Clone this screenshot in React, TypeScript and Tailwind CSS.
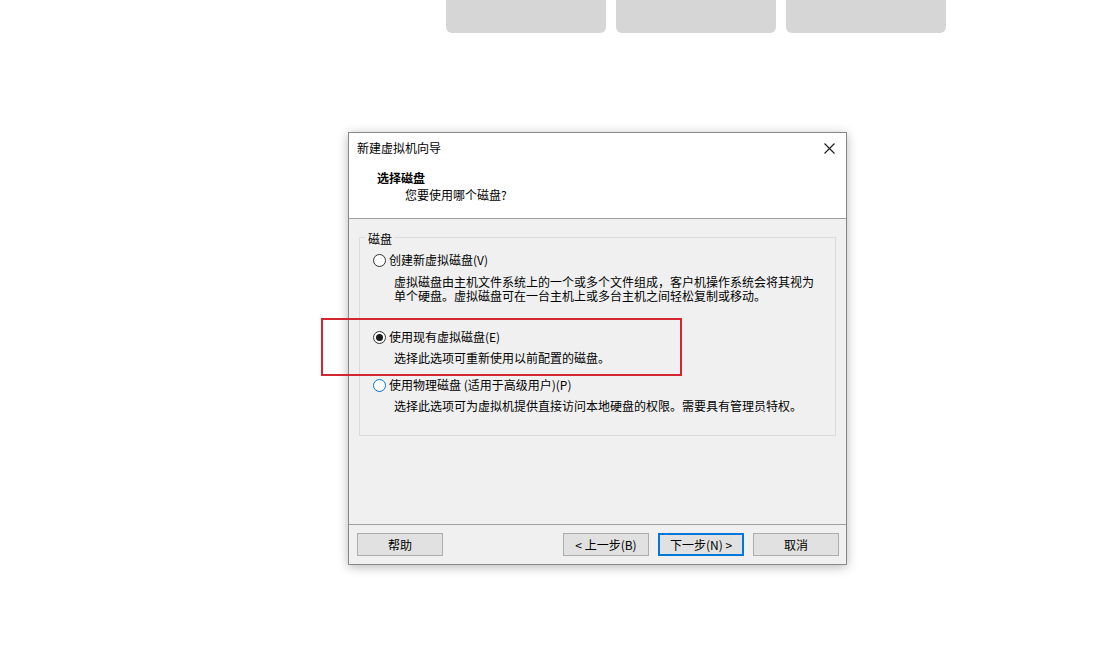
import React from 'react';

const font = { fontFamily: '"Noto Sans CJK SC", "Noto Sans", sans-serif' };

function Radio({ checked, focus }: { checked?: boolean; focus?: boolean }) {
    return (
        <span
            className={`flex h-[13px] w-[13px] shrink-0 items-center justify-center rounded-full border bg-white ${
                focus ? 'border-[#0078d7]' : 'border-[#333333]'
            }`}
        >
            {checked && <span className="h-[7px] w-[7px] rounded-full bg-[#1a1a1a]" />}
        </span>
    );
}

function WinButton({ label, primary }: { label: string; primary?: boolean }) {
    return (
        <button
            className={`flex h-[23px] w-[86px] items-center justify-center bg-[#e1e1e1] text-[12px] leading-none text-black ${
                primary ? 'border-2 border-[#0078d7]' : 'border border-[#adadad]'
            }`}
        >
            {label}
        </button>
    );
}

export default function App() {
    return (
        <div className="relative h-[659px] w-[1103px] overflow-hidden bg-white" style={font}>
            {/* Buttons of the page behind, cut off at the top */}
            <div className="ml-[446px] flex gap-[10px]">
                {[0, 1, 2].map((i) => (
                    <div key={i} className="h-[33px] w-[160px] rounded-b-[6px] bg-[#d6d6d6]" />
                ))}
            </div>

            {/* Wizard dialog */}
            <div className="ml-[348px] mt-[99px] flex h-[433px] w-[499px] flex-col border border-[#888888] bg-white shadow-[0_2px_10px_rgba(0,0,0,0.28)]">
                {/* Title bar */}
                <div className="flex h-[30px] items-center justify-between pl-[8px] pr-[11px]">
                    <span className="text-[12px] text-black">新建虚拟机向导</span>
                    <svg width="11" height="11" viewBox="0 0 11 11">
                        <path d="M0.5 0.5 L10.5 10.5 M10.5 0.5 L0.5 10.5" stroke="#1a1a1a" strokeWidth="1.1" />
                    </svg>
                </div>

                {/* Header */}
                <div className="h-[56px] border-b border-[#a0a0a0] pl-[28px] pt-[7px]">
                    <div className="text-[12px] font-bold leading-[16px] text-black">选择磁盘</div>
                    <div className="ml-[28px] mt-[1px] text-[12px] leading-[16px] text-black">您要使用哪个磁盘?</div>
                </div>

                {/* Body */}
                <div className="flex-1 bg-[#f0f0f0] px-[10px] pt-[18px]">
                    <div className="relative h-[199px] w-[477px] border border-[#dcdcdc] pl-[13px] pt-[14px] text-[12px] text-black">
                        <span className="absolute -top-[6px] left-[6px] bg-[#f0f0f0] px-[2px] leading-[14px]">磁盘</span>

                        <div className="flex h-[16px] items-center gap-[3px]">
                            <Radio />
                            <span className="leading-[16px]">创建新虚拟磁盘(V)</span>
                        </div>
                        <div className="ml-[21px] mt-[7px] leading-[14px]">
                            <div>虚拟磁盘由主机文件系统上的一个或多个文件组成，客户机操作系统会将其视为</div>
                            <div>单个硬盘。虚拟磁盘可在一台主机上或多台主机之间轻松复制或移动。</div>
                        </div>

                        <div className="mt-[26px] flex h-[16px] items-center gap-[3px]">
                            <Radio checked />
                            <span className="leading-[16px]">使用现有虚拟磁盘(E)</span>
                        </div>
                        <div className="ml-[21px] mt-[6px] leading-[14px]">选择此选项可重新使用以前配置的磁盘。</div>

                        <div className="mt-[12px] flex h-[16px] items-center gap-[3px]">
                            <Radio focus />
                            <span className="leading-[16px]">使用物理磁盘 (适用于高级用户)(P)</span>
                        </div>
                        <div className="ml-[21px] mt-[6px] leading-[14px]">
                            选择此选项可为虚拟机提供直接访问本地硬盘的权限。需要具有管理员特权。
                        </div>
                    </div>
                </div>

                {/* Footer */}
                <div className="flex h-[40px] items-start border-t border-[#a0a0a0] bg-[#f0f0f0] pl-[8px] pr-[7px] pt-[8px]">
                    <WinButton label="帮助" />
                    <div className="ml-auto flex gap-[9px]">
                        <WinButton label="< 上一步(B)" />
                        <WinButton label="下一步(N) >" primary />
                        <WinButton label="取消" />
                    </div>
                </div>
            </div>

            {/* Red highlight annotation */}
            <div className="absolute left-[321px] top-[318px] h-[58px] w-[361px] border-2 border-[#d3262e]" />
        </div>
    );
}
